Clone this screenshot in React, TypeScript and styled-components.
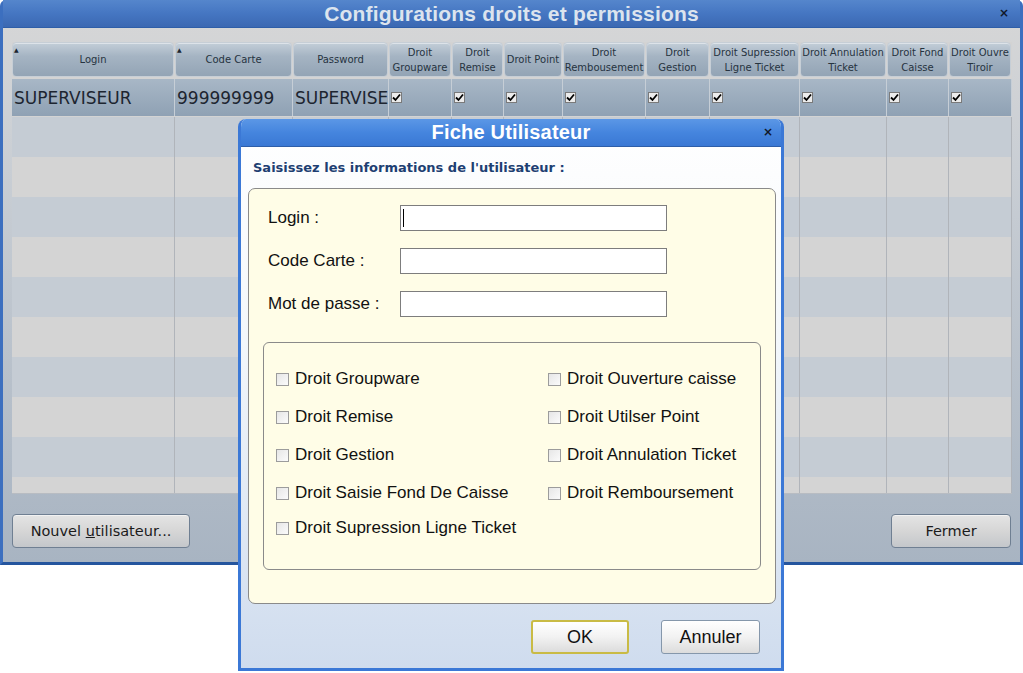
import React from 'react';
import styled, { createGlobalStyle } from 'styled-components';

const GlobalStyle = createGlobalStyle`
  html, body {
    margin: 0;
    padding: 0;
    background: #ffffff;
    width: 1023px;
    height: 673px;
    overflow: hidden;
    font-family: 'DejaVu Sans', Verdana, sans-serif;
  }
`;

const Page = styled.div`
  position: relative;
  width: 1023px;
  height: 673px;
`;

const MainWindow = styled.div`
  width: 1023px;
  height: 565px;
  box-sizing: border-box;
  display: flex;
  flex-direction: column;
  border-left: 3px solid #3c6fbf;
  border-right: 3px solid #3c6fbf;
  border-bottom: 3px solid #25559e;
  border-radius: 6px 6px 0 0;
  background: linear-gradient(#d7d7d7 0%, #c9ced4 30%, #a8b4c2 100%);
`;

const TitleBar = styled.div<{ height: number; bright?: boolean }>`
  height: ${(p) => p.height}px;
  flex-shrink: 0;
  display: flex;
  align-items: center;
  justify-content: center;
  position: relative;
  background: ${(p) =>
    p.bright
      ? 'linear-gradient(#5b97e6 0%, #4585de 50%, #3a78d4 100%)'
      : 'linear-gradient(#5586cc 0%, #4576c2 50%, #3b68b2 100%)'};
  border-bottom: 1px solid #2e5ea8;
`;

const TitleText = styled.span<{ size: number; color: string }>`
  font-family: 'Liberation Sans', Arial, sans-serif;
  font-weight: bold;
  font-size: ${(p) => p.size}px;
  color: ${(p) => p.color};
  letter-spacing: 0.2px;
`;

const CloseMark = styled.span<{ right: number }>`
  position: absolute;
  right: ${(p) => p.right}px;
  top: 50%;
  transform: translateY(-55%);
  font-family: 'DejaVu Sans', sans-serif;
  font-weight: bold;
  font-size: 12px;
  color: #10182a;
`;

const Body = styled.div`
  flex: 1;
  display: flex;
  flex-direction: column;
  padding: 14px 8px 0 9px;
`;

const COLS = [163, 118, 96, 63, 52, 59, 83, 64, 90, 87, 62, 63];

const Grid = styled.div`
  height: 451px;
  overflow: hidden;
  display: grid;
  grid-template-columns: ${COLS.map((c) => `${c}px`).join(' ')};
  grid-auto-rows: 40px;
  grid-template-rows: 36px 39px;
  align-content: start;
  background: #d3d3d3;
  border-bottom: 1px solid #b8bcc2;
`;

const HeaderCell = styled.div`
  position: relative;
  margin: 0 1px 1px 0;
  border-radius: 4px;
  border: 1px solid #c6ced6;
  display: flex;
  align-items: center;
  justify-content: center;
  text-align: center;
  font-size: 10px;
  line-height: 15px;
  color: #26333f;
  background: linear-gradient(#c3ced8 0%, #a5b4c3 40%, #93a4b5 100%);
  box-shadow: inset 0 1px 0 rgba(255, 255, 255, 0.45);
`;

const SortArrow = styled.span`
  position: absolute;
  left: 1px;
  top: -1px;
  font-size: 6px;
  color: #1c2430;
`;

const DataCell = styled.div`
  margin-top: 1px;
  height: 37px;
  display: flex;
  align-items: center;
  padding-left: 2px;
  font-size: 17px;
  color: #1d2530;
  white-space: nowrap;
  overflow: hidden;
  border-right: 1px solid #c6ced6;
  background: linear-gradient(#a8b7c6 0%, #9aabbc 55%, #8fa1b4 100%);
`;

const EmptyCell = styled.div<{ odd: boolean }>`
  border-right: 1px solid #b0b4ba;
  background: ${(p) => (p.odd ? '#d4d4d4' : '#c5ccd4')};
`;

const TinyCheck = styled.span`
  width: 11px;
  height: 11px;
  box-sizing: border-box;
  border: 1px solid #7a7a7a;
  background: #ececec;
  display: inline-flex;
  align-items: center;
  justify-content: center;
`;

const Footer = styled.div`
  display: flex;
  justify-content: space-between;
  padding: 20px 1px 0 0;
`;

const WinButton = styled.button<{ width: number }>`
  width: ${(p) => p.width}px;
  height: 34px;
  border-radius: 4px;
  border: 1px solid #6f7f92;
  background: linear-gradient(#e4e4e4 0%, #d6d6d6 50%, #c4c7cb 100%);
  box-shadow: inset 0 1px 0 #f2f2f2;
  font-family: 'DejaVu Sans', Verdana, sans-serif;
  font-size: 14.5px;
  color: #1b1b1b;
  padding: 0;
  u {
    text-decoration: underline;
  }
`;

const Dialog = styled.div`
  position: absolute;
  left: 238px;
  top: 119px;
  width: 546px;
  height: 552px;
  box-sizing: border-box;
  display: flex;
  flex-direction: column;
  border: 3px solid #3b78d6;
  border-top: none;
  border-radius: 8px 8px 0 0;
  background: linear-gradient(#ffffff 0%, #f3f7fb 40%, #cfdcee 100%);
  overflow: hidden;
`;

const Subtitle = styled.div`
  padding: 13px 0 0 12px;
  height: 28px;
  font-family: 'DejaVu Sans', Verdana, sans-serif;
  font-weight: bold;
  font-size: 13px;
  color: #1e3f72;
`;

const Panel = styled.div`
  margin: 0 5px 0 7px;
  height: 416px;
  box-sizing: border-box;
  border: 1px solid #8a8a8a;
  border-radius: 7px;
  background: #fffde7;
  padding: 16px 14px 0 14px;
  display: flex;
  flex-direction: column;
`;

const FieldRow = styled.div`
  display: flex;
  align-items: center;
  height: 25px;
  margin-bottom: 18px;
`;

const Label = styled.label`
  width: 132px;
  padding-left: 5px;
  font-family: 'Liberation Sans', Arial, sans-serif;
  font-size: 17px;
  color: #111;
`;

const TextInput = styled.div<{ focused?: boolean }>`
  width: 267px;
  height: 26px;
  box-sizing: border-box;
  border: 1px solid #7d7d7d;
  background: #ffffff;
  position: relative;
  &::after {
    content: '';
    display: ${(p) => (p.focused ? 'block' : 'none')};
    position: absolute;
    left: 2px;
    top: 3px;
    width: 1px;
    height: 18px;
    background: #000;
  }
`;

const GroupBox = styled.div`
  margin-top: 8px;
  height: 228px;
  box-sizing: border-box;
  border: 1px solid #8a8a8a;
  border-radius: 6px;
  padding: 26px 0 0 12px;
  display: grid;
  grid-template-columns: 272px 1fr;
  grid-template-rows: repeat(3, 38px) 35px 38px;
  grid-auto-flow: column;
`;

const CheckItem = styled.div`
  display: flex;
  align-items: center;
  height: 20px;
  font-family: 'Liberation Sans', Arial, sans-serif;
  font-size: 17px;
  color: #111;
  gap: 6px;
  white-space: nowrap;
`;

const Box = styled.span`
  width: 13px;
  height: 13px;
  flex-shrink: 0;
  box-sizing: border-box;
  border: 1px solid #9c9c9c;
  background: linear-gradient(135deg, #e6e6e6, #fbfbfb);
`;

const DialogFooter = styled.div`
  flex: 1;
  display: flex;
  justify-content: flex-end;
  align-items: flex-start;
  gap: 32px;
  padding: 16px 21px 0 0;
`;

const DlgButton = styled.button<{ primary?: boolean }>`
  width: ${(p) => (p.primary ? 98 : 99)}px;
  height: 34px;
  border-radius: 3px;
  border: ${(p) => (p.primary ? '2px solid #c9bb45' : '1px solid #8597ab')};
  background: linear-gradient(#ffffff 0%, #f2f2f2 50%, #dcdcdc 100%);
  font-family: 'Liberation Sans', Arial, sans-serif;
  font-size: 18px;
  color: #111;
  padding: 0;
`;

const check = (
  <svg width="9" height="9" viewBox="0 0 9 9">
    <path d="M1 4.5 L3.5 7 L8 1.5" stroke="#000" strokeWidth="1.8" fill="none" />
  </svg>
);

const headers: { label: React.ReactNode; sort?: boolean }[] = [
  { label: 'Login', sort: true },
  { label: 'Code Carte', sort: true },
  { label: 'Password' },
  { label: <>Droit<br />Groupware</> },
  { label: <>Droit<br />Remise</> },
  { label: 'Droit Point' },
  { label: <>Droit<br />Rembousement</> },
  { label: <>Droit<br />Gestion</> },
  { label: <>Droit Supression<br />Ligne Ticket</> },
  { label: <>Droit Annulation<br />Ticket</> },
  { label: <>Droit Fond<br />Caisse</> },
  { label: <>Droit Ouvre<br />Tiroir</> }
];

const rights = [
  'Droit Groupware',
  'Droit Remise',
  'Droit Gestion',
  'Droit Saisie Fond De Caisse',
  'Droit Supression Ligne Ticket',
  'Droit Ouverture caisse',
  'Droit Utilser Point',
  'Droit Annulation Ticket',
  'Droit Remboursement'
];

export default function App() {
  return (
    <Page>
      <GlobalStyle />
      <MainWindow>
        <TitleBar height={27}>
          <TitleText size={21} color="#dce4ee">Configurations droits et permissions</TitleText>
          <CloseMark right={11}>×</CloseMark>
        </TitleBar>
        <Body>
          <Grid>
            {headers.map((h, i) => (
              <HeaderCell key={i}>
                {h.sort && <SortArrow>▲</SortArrow>}
                <span>{h.label}</span>
              </HeaderCell>
            ))}
            <DataCell>SUPERVISEUR</DataCell>
            <DataCell>999999999</DataCell>
            <DataCell>SUPERVISE</DataCell>
            {COLS.slice(3).map((_, i) => (
              <DataCell key={i}>
                <TinyCheck>{check}</TinyCheck>
              </DataCell>
            ))}
            {Array.from({ length: 10 }).map((_, r) =>
              COLS.map((_, c) => <EmptyCell key={`${r}-${c}`} odd={r % 2 === 1} />)
            )}
          </Grid>
          <Footer>
            <WinButton width={178}>
              Nouvel <u>u</u>tilisateur...
            </WinButton>
            <WinButton width={120}>Fermer</WinButton>
          </Footer>
        </Body>
      </MainWindow>

      <Dialog>
        <TitleBar height={27} bright>
          <TitleText size={20} color="#ffffff">Fiche Utilisateur</TitleText>
          <CloseMark right={8}>×</CloseMark>
        </TitleBar>
        <Subtitle>Saisissez les informations de l'utilisateur :</Subtitle>
        <Panel>
          <FieldRow>
            <Label>Login :</Label>
            <TextInput focused />
          </FieldRow>
          <FieldRow>
            <Label>Code Carte :</Label>
            <TextInput />
          </FieldRow>
          <FieldRow>
            <Label>Mot de passe :</Label>
            <TextInput />
          </FieldRow>
          <GroupBox>
            {rights.map((r) => (
              <CheckItem key={r}>
                <Box />
                {r}
              </CheckItem>
            ))}
          </GroupBox>
        </Panel>
        <DialogFooter>
          <DlgButton primary>OK</DlgButton>
          <DlgButton>Annuler</DlgButton>
        </DialogFooter>
      </Dialog>
    </Page>
  );
}
